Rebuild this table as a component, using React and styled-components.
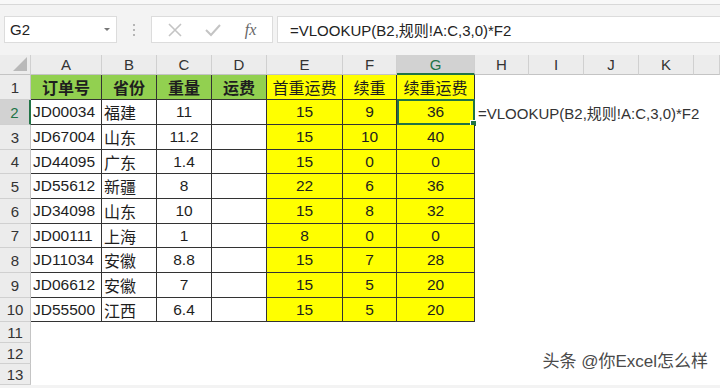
import React from 'react';
import styled, { createGlobalStyle } from 'styled-components';

const Global = createGlobalStyle`
  html, body { margin: 0; padding: 0; background: #fff; }
  body { font-family: "Liberation Sans", "Noto Sans CJK SC", sans-serif; }
`;

const COLS = [31, 71, 55, 55, 55, 76, 54, 78, 54, 55, 55, 55];
const LETTERS = ['A', 'B', 'C', 'D', 'E', 'F', 'G', 'H', 'I', 'J', 'K'];
const ROW_H = [25, 25, 25, 24, 25, 25, 24, 25, 25, 24, 21, 21, 21];

const header = ['订单号', '省份', '重量', '运费', '首重运费', '续重', '续重运费'];
const data = [
  ['JD00034', '福建', '11', '', '15', '9', '36'],
  ['JD67004', '山东', '11.2', '', '15', '10', '40'],
  ['JD44095', '广东', '1.4', '', '15', '0', '0'],
  ['JD55612', '新疆', '8', '', '22', '6', '36'],
  ['JD34098', '山东', '10', '', '15', '8', '32'],
  ['JD00111', '上海', '1', '', '8', '0', '0'],
  ['JD11034', '安徽', '8.8', '', '15', '7', '28'],
  ['JD06612', '安徽', '7', '', '15', '5', '20'],
  ['JD55500', '江西', '6.4', '', '15', '5', '20'],
];

const FORMULA = '=VLOOKUP(B2,规则!A:C,3,0)*F2';

const Window = styled.div`
  position: relative;
  width: 720px;
  height: 388px;
  overflow: hidden;
  background: #f3f3f3;
`;

const TopStrip = styled.div`
  height: 4px;
  background: #f8f8f8;
  border-bottom: 1px solid #d8d8d8;
`;

const FormulaBar = styled.div`
  display: flex;
  align-items: center;
  height: 27px;
  padding: 11px 0 12px 4px;
`;

const NameBox = styled.div`
  display: flex;
  align-items: center;
  justify-content: space-between;
  width: 113px;
  height: 27px;
  box-sizing: border-box;
  background: #fff;
  border: 1px solid #dcdcdc;
  padding: 0 6px 0 5px;
  font-size: 15px;
  color: #222;
`;

const Caret = styled.span`
  width: 0;
  height: 0;
  border-left: 3px solid transparent;
  border-right: 3px solid transparent;
  border-top: 3px solid #777;
`;

const Dots = styled.div`
  display: flex;
  flex-direction: column;
  gap: 3px;
  margin: 0 16px 0 16px;
  span {
    width: 2px;
    height: 2px;
    background: #b5b5b5;
  }
`;

const FxBox = styled.div`
  display: flex;
  align-items: center;
  justify-content: space-around;
  width: 122px;
  height: 27px;
  box-sizing: border-box;
  background: #fff;
  border: 1px solid #dcdcdc;
  padding: 0 4px;
`;

const Fx = styled.span`
  font-family: "Liberation Serif", "DejaVu Serif", serif;
  font-style: italic;
  font-size: 16px;
  color: #666;
`;

const FormulaInput = styled.div`
  flex: 1;
  height: 27px;
  margin-left: 4px;
  box-sizing: border-box;
  background: #fff;
  border: 1px solid #dcdcdc;
  border-right: none;
  padding: 0 12px;
  display: flex;
  align-items: center;
  font-size: 15px;
  color: #222;
  white-space: nowrap;
`;

const Sheet = styled.div`
  display: grid;
  grid-template-columns: ${COLS.map((w) => w + 'px').join(' ')} 1fr;
  grid-template-rows: 20px ${ROW_H.map((h) => h + 'px').join(' ')};
  background: #fff;
`;

const Corner = styled.div`
  position: relative;
  background: #ececec;
  border-right: 1px solid #d0d0d0;
  border-bottom: 1px solid #c4c4c4;
  box-sizing: border-box;
  svg { position: absolute; right: 3px; bottom: 3px; }
`;

const ColHead = styled.div`
  display: flex;
  align-items: center;
  justify-content: center;
  box-sizing: border-box;
  font-size: 15px;
  background: ${(p) => (p.$sel ? '#d2d2d2' : '#ececec')};
  color: ${(p) => (p.$sel ? '#217346' : '#333')};
  border-right: 1px solid #d0d0d0;
  border-bottom: ${(p) => (p.$sel ? '2px solid #217346' : '1px solid #c4c4c4')};
`;

const RowHead = styled.div`
  display: flex;
  align-items: center;
  justify-content: center;
  box-sizing: border-box;
  font-size: 15px;
  background: ${(p) => (p.$sel ? '#d2d2d2' : '#ececec')};
  color: ${(p) => (p.$sel ? '#217346' : '#333')};
  border-bottom: 1px solid #d0d0d0;
  border-right: ${(p) => (p.$sel ? '2px solid #217346' : '1px solid #c4c4c4')};
`;

const Cell = styled.div`
  position: relative;
  display: flex;
  align-items: center;
  justify-content: ${(p) => (p.$align === 'left' ? 'flex-start' : 'center')};
  box-sizing: border-box;
  padding: ${(p) => (p.$align === 'left' ? '0 0 0 2px' : '0')};
  background: ${(p) => p.$bg || 'transparent'};
  font-size: ${(p) => (p.$cjk ? '16px' : '15.5px')};
  font-weight: ${(p) => (p.$bold ? 700 : 400)};
  color: #1e1e1e;
  white-space: nowrap;
  border-right: ${(p) => (p.$table ? '1px solid #333' : 'none')};
  border-bottom: ${(p) => (p.$table ? '1px solid #333' : 'none')};
`;

const Selection = styled.div`
  position: absolute;
  inset: -1px -1px -1px 0;
  border: 2px solid #217346;
  pointer-events: none;
  &::after {
    content: '';
    position: absolute;
    right: -4px;
    bottom: -4px;
    width: 5px;
    height: 5px;
    background: #217346;
    border: 1px solid #fff;
  }
`;

const Overflow = styled.span`
  font-size: 15px;
  color: #333;
  padding-left: 1px;
`;

const Watermark = styled.div`
  position: absolute;
  right: 12px;
  bottom: 16px;
  font-size: 17px;
  color: #4a4a4a;
  text-shadow: 0 0 2px #fff, 0 0 2px #fff;
`;

const greenBg = '#92d050';
const yellowBg = '#ffff00';

const App = () => {
  const rows = [header, ...data];
  return (
    <Window>
      <Global />
      <TopStrip />
      <FormulaBar>
        <NameBox>
          G2
          <Caret />
        </NameBox>
        <Dots>
          <span />
          <span />
          <span />
        </Dots>
        <FxBox>
          <svg width="14" height="14" viewBox="0 0 14 14">
            <path d="M1 1 L13 13 M13 1 L1 13" stroke="#c4c4c4" strokeWidth="1.6" fill="none" />
          </svg>
          <svg width="16" height="14" viewBox="0 0 16 14">
            <path d="M1 7 L6 12 L15 2" stroke="#c4c4c4" strokeWidth="2" fill="none" />
          </svg>
          <Fx>fx</Fx>
        </FxBox>
        <FormulaInput>{FORMULA}</FormulaInput>
      </FormulaBar>
      <Sheet>
        <Corner>
          <svg width="14" height="14" viewBox="0 0 14 14">
            <polygon points="14,0 14,14 0,14" fill="#b9b9b9" />
          </svg>
        </Corner>
        {LETTERS.map((l) => (
          <ColHead key={l} $sel={l === 'G'}>
            {l}
          </ColHead>
        ))}
        <ColHead />
        {ROW_H.map((_, r) => {
          const vals = rows[r];
          return (
            <React.Fragment key={r}>
              <RowHead $sel={r === 1}>{r + 1}</RowHead>
              {LETTERS.map((l, c) => {
                const inTable = vals && c < 7;
                if (!inTable) {
                  const spill = r === 1 && c === 7;
                  return (
                    <Cell key={l} $align="left">
                      {spill ? <Overflow>{FORMULA}</Overflow> : null}
                    </Cell>
                  );
                }
                const isHead = r === 0;
                const bg = isHead ? (c < 4 ? greenBg : yellowBg) : c >= 4 ? yellowBg : '#fff';
                return (
                  <Cell
                    key={l}
                    $table
                    $bg={bg}
                    $bold={isHead && c < 4}
                    $cjk={isHead || c === 1}
                    $align={!isHead && (c === 0 || c === 1) ? 'left' : 'center'}
                  >
                    {vals[c]}
                    {r === 1 && c === 6 ? <Selection /> : null}
                  </Cell>
                );
              })}
              <Cell />
            </React.Fragment>
          );
        })}
      </Sheet>
      <Watermark>头条 @你Excel怎么样</Watermark>
    </Window>
  );
};

export default App;
